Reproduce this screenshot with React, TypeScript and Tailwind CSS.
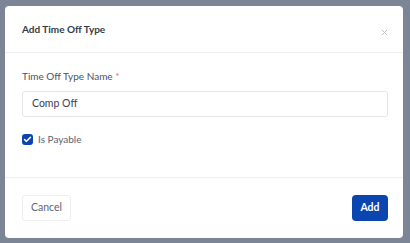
import { X, Check } from 'lucide-react';

export default function App() {
  return (
    <div
      className="w-[410px] h-[243px] bg-[#7c8595] pt-[6px] pl-[5px]"
      style={{ fontFamily: 'Lato, "Noto Sans", sans-serif' }}
    >
      <div className="w-[398px] h-[232px] bg-white rounded-[4px] flex flex-col">
        {/* Header */}
        <div className="h-[47px] flex items-center justify-between pl-[17px] pr-[14px] border-b border-[#edf0f3]">
          <h2 className="text-[10px] font-bold text-[#343a46]">Add Time Off Type</h2>
          <X className="w-[9px] h-[9px] text-[#b8bcc4] mt-[6px]" strokeWidth={2.5} />
        </div>

        {/* Body */}
        <div className="h-[125px] pl-[17px] pr-[15px] pt-[16px] border-b border-[#edf0f3]">
          <label className="block text-[10px] text-[#4b5361] leading-[14px]">
            Time Off Type Name <span className="text-[#f06a6a]">*</span>
          </label>
          <div className="mt-[8px] h-[26px] border border-[#e3e6ea] rounded-[3px] flex items-center px-[9px]">
            <span className="text-[10.5px] text-[#3b4250]">Comp Off</span>
          </div>
          <div className="mt-[15px] flex items-center gap-[5px]">
            <span className="w-[11px] h-[11px] rounded-[3px] bg-[#0b44ae] flex items-center justify-center">
              <Check className="w-[9px] h-[9px] text-white" strokeWidth={4} />
            </span>
            <span className="text-[10px] text-[#5a6270]">Is Payable</span>
          </div>
        </div>

        {/* Footer */}
        <div className="flex-1 flex items-center justify-between pl-[17px] pr-[15px]">
          <button className="h-[26px] px-[8px] border border-[#eceef1] rounded-[3px] text-[10.5px] text-[#5d6470]">
            Cancel
          </button>
          <button className="h-[26px] w-[36px] bg-[#0b45b0] rounded-[4px] text-[10.5px] font-bold text-white">
            Add
          </button>
        </div>
      </div>
    </div>
  );
}
